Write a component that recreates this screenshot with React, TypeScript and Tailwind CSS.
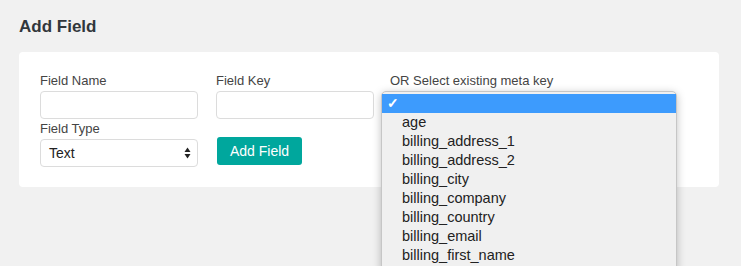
import React from "react";

const items = [
  "age",
  "billing_address_1",
  "billing_address_2",
  "billing_city",
  "billing_company",
  "billing_country",
  "billing_email",
  "billing_first_name",
];

export default function App() {
  return (
    <div
      className="relative w-[741px] h-[266px] overflow-hidden bg-[#f1f1f1]"
      style={{ fontFamily: '"Liberation Sans", Arial, sans-serif' }}
    >
      <div className="pl-[19px] pr-[22px] pt-[15px]">
        <h1 className="text-[17px] leading-[24px] font-bold text-[#32373c]">Add Field</h1>
        <div className="mt-[13px] h-[135px] rounded-[4px] bg-white pl-[21px] pt-[20px]">
          <div className="grid grid-cols-[176px_174px_1fr]">
            <div>
              <div className="text-[13px] leading-[18px] text-[#444]">Field Name</div>
              <div className="mt-px h-[28px] w-[158px] rounded-[4px] border border-[#dcdcdc] bg-white"></div>
            </div>
            <div>
              <div className="text-[13px] leading-[18px] text-[#444]">Field Key</div>
              <div className="mt-px h-[28px] w-[158px] rounded-[4px] border border-[#dcdcdc] bg-white"></div>
            </div>
            <div>
              <div className="text-[13px] leading-[18px] text-[#444]">OR Select existing meta key</div>
            </div>
            <div>
              <div className="text-[13px] leading-[18px] text-[#444] mt-px">Field Type</div>
              <div className="mt-px flex h-[28px] w-[158px] items-center justify-between rounded-[4px] border border-[#dcdcdc] bg-white pl-[8px] pr-[6px]">
                <span className="text-[14px] leading-[18px] text-[#222]">Text</span>
                <svg width="7" height="12" viewBox="0 0 7 12">
                  <path d="M3.5 0.5 L6.5 5 L0.5 5 Z" fill="#222" />
                  <path d="M3.5 11.5 L6.5 7 L0.5 7 Z" fill="#222" />
                </svg>
              </div>
            </div>
            <div className="pt-[18px] pl-px">
              <button className="h-[28px] w-[85px] rounded-[3px] bg-[#00a79d] text-[14px] text-white">
                Add Field
              </button>
            </div>
          </div>
        </div>
      </div>

      <div className="absolute left-[381px] top-[91px] w-[296px] h-[180px] rounded-t-[5px] border border-[#c6c6c6] bg-[#f0f0f0] pt-[2px] shadow-[0_2px_8px_rgba(0,0,0,0.25)]">
        <div className="flex h-[19px] items-center bg-[#3d9bfd] pl-[5px] text-white">
          <span className="text-[14px] leading-[19px] font-bold">✓</span>
        </div>
        {items.map((it) => (
          <div key={it} className="h-[19px] pl-[20px] text-[14.5px] leading-[19px] text-[#222]">
            {it}
          </div>
        ))}
      </div>
    </div>
  );
}
